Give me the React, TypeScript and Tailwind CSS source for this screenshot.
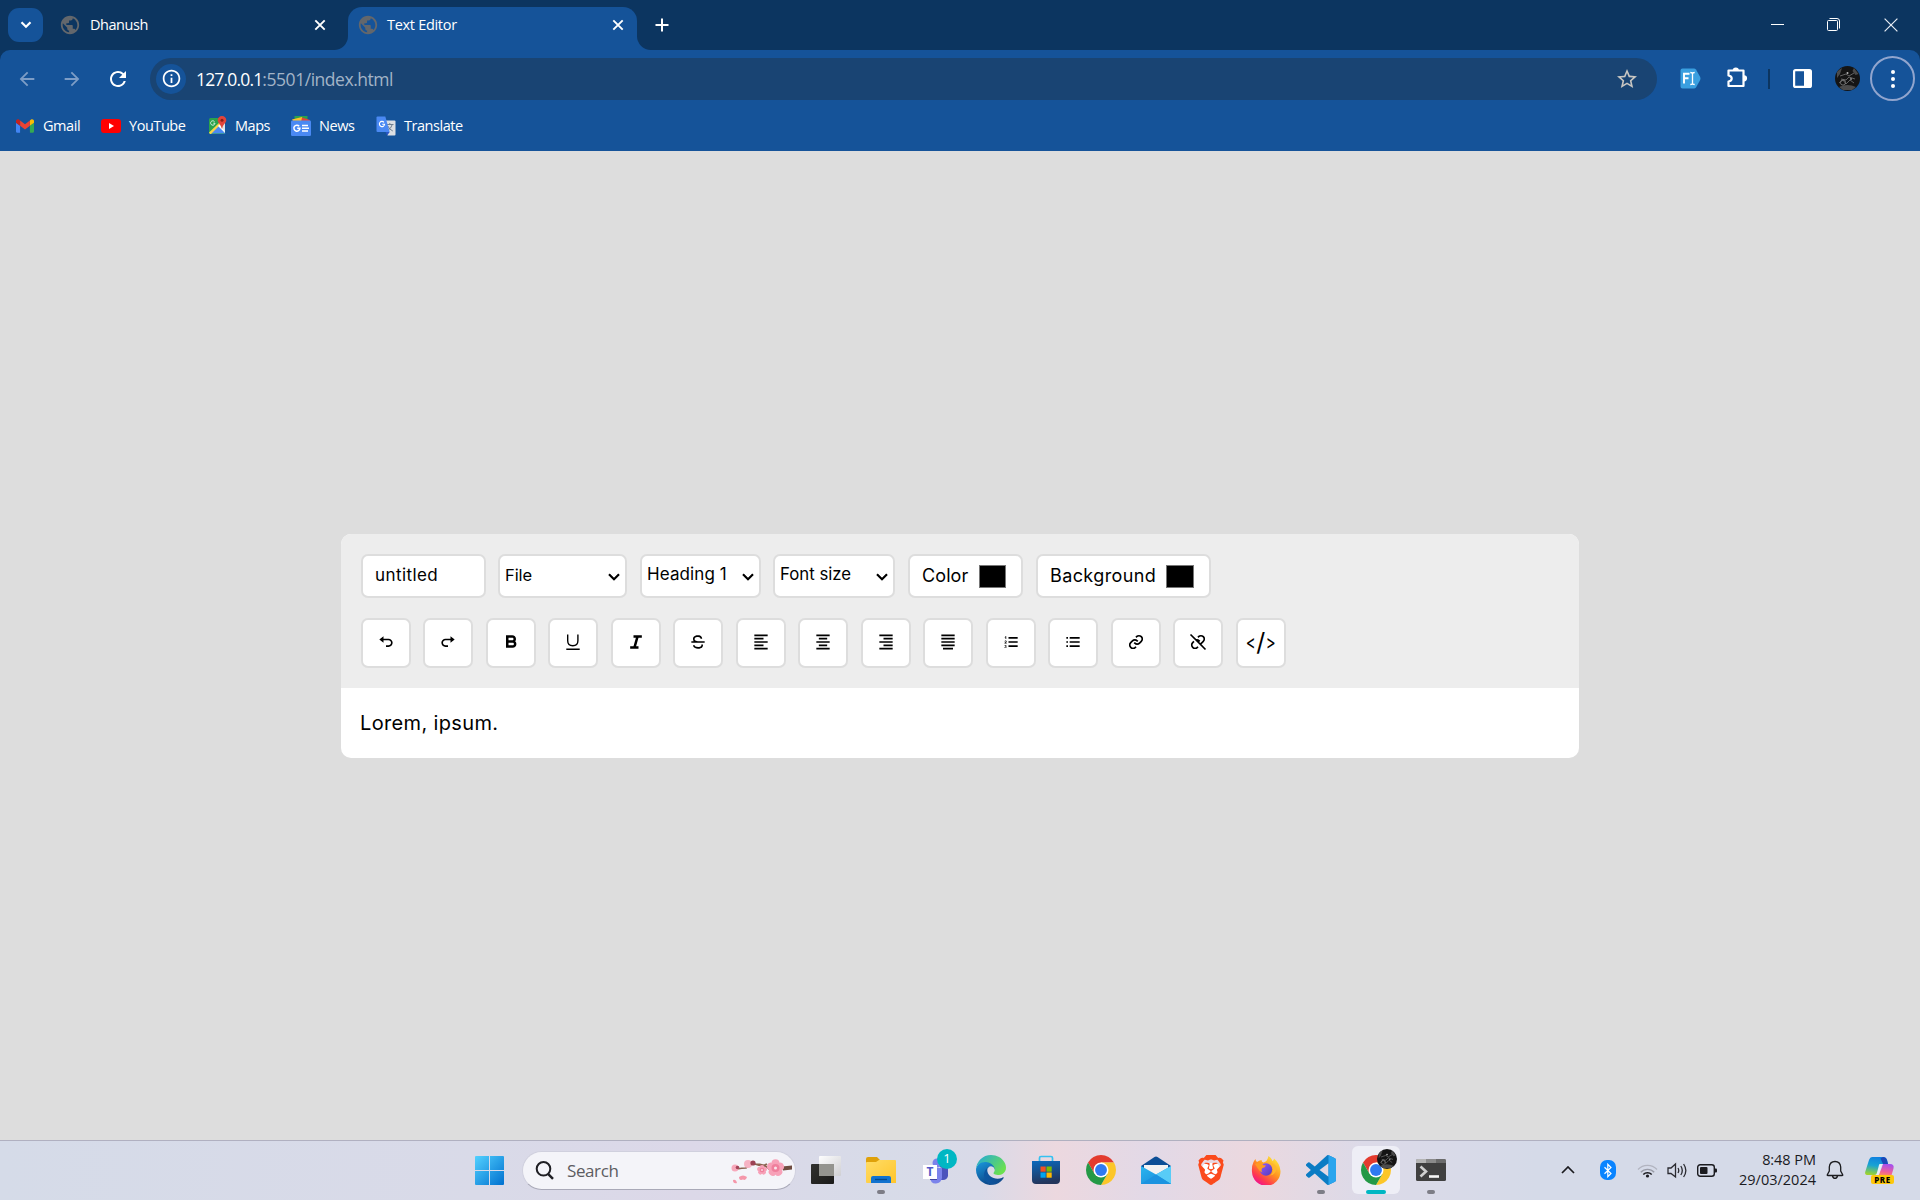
import React from 'react';
import type { ReactNode } from 'react';
import {
  BiUndo, BiRedo, BiBold, BiItalic, BiStrikethrough, BiAlignLeft, BiAlignMiddle,
  BiAlignRight, BiAlignJustify, BiListOl, BiListUl, BiLink, BiUnlink,
} from 'react-icons/bi';
import { MdPublic, MdArrowBack, MdArrowForward, MdRefresh, MdInfoOutline, MdStarBorder } from 'react-icons/md';
import { SiBrave } from 'react-icons/si';

/* ---------- browser chrome ---------- */

function CloseX() {
  return (
    <svg width="12" height="12" viewBox="0 0 12 12" fill="none" stroke="#fff" strokeWidth="1.9">
      <path d="M1.3 1.3 10.7 10.7M10.7 1.3 1.3 10.7" />
    </svg>
  );
}

function TabStrip() {
  return (
    <div className="flex h-[50px] items-start">
      <button className="ml-2 mt-2 flex h-[34px] w-[35px] items-center justify-center rounded-[11px] bg-[#155399]">
        <svg width="12" height="8" viewBox="0 0 12 8" fill="none" stroke="#fff" strokeWidth="2.2">
          <path d="m1.5 1.2 4.5 4.5 4.5-4.5" />
        </svg>
      </button>
      <div className="flex h-[50px] w-[305px] items-center pl-[16px] pr-[22px]">
        <MdPublic className="size-[22px] text-[#63676c]" />
        <span className="ml-[9px] flex-1 text-[14.5px] tracking-[-0.45px]">Dhanush</span>
        <CloseX />
      </div>
      <div className="relative flex h-[43px] w-[289px] items-center self-end rounded-t-[14px] bg-[#155399] pb-[7px] pl-[9px] pr-[13px]">
        <div className="absolute bottom-0 -left-[14px] size-[14px] bg-[#155399]">
          <div className="size-full rounded-br-[14px] bg-[#0c3560]" />
        </div>
        <div className="absolute bottom-0 -right-[14px] size-[14px] bg-[#155399]">
          <div className="size-full rounded-bl-[14px] bg-[#0c3560]" />
        </div>
        <MdPublic className="size-[22px] text-[#63676c]" />
        <span className="ml-[8px] flex-1 text-[14.5px] tracking-[-0.3px]">Text Editor</span>
        <CloseX />
      </div>
      <div className="ml-[18px] flex h-[50px] items-center">
        <svg width="14" height="14" viewBox="0 0 14 14" stroke="#fff" strokeWidth="2">
          <path d="M7 .5v13M.5 7h13" />
        </svg>
      </div>
      <div className="ml-auto flex h-[49px] items-center pr-[22px]">
        <div className="h-px w-[13px] bg-white" />
        <svg className="ml-[43px]" width="13" height="13" viewBox="0 0 13 13" fill="none" stroke="#fff">
          <path d="M2.5.5H10A2.5 2.5 0 0 1 12.5 3v7.5" />
          <rect x=".5" y="2.5" width="10" height="10" rx="1" />
        </svg>
        <svg className="ml-[44px]" width="14" height="14" viewBox="0 0 14 14" stroke="#e8edf4" strokeWidth="1.2">
          <path d="m.6.6 12.8 12.8M13.4.6.6 13.4" />
        </svg>
      </div>
    </div>
  );
}

function Avatar({ className }: { className: string }) {
  return (
    <svg className={className} viewBox="0 0 25 25">
      <circle cx="12.5" cy="12.5" r="12.5" fill="#141414" />
      <path d="M2 6a12.5 12.5 0 0 1 5-4l-2 6-3 4ZM19 2l4.5 6-3 1-3-4Z" fill="#4b4b4b" />
      <path d="M4 21q8-4 17 0l-4 3H8Z" fill="#4c4c4c" />
      <path d="M5 10l6-2 3 2 5-3M6 13l5 1 3-3 6 2M4 17l4-3 3 4 4-4 4 3" fill="none" stroke="#626262" strokeWidth="1" />
      <circle cx="8" cy="16.5" r="2.6" fill="none" stroke="#808080" strokeWidth=".8" />
      <circle cx="12.5" cy="7" r="1" fill="#b8b8b8" />
      <circle cx="16" cy="13" r=".9" fill="#999" />
    </svg>
  );
}

function AddressRow() {
  return (
    <div className="flex h-[57px] items-center pl-[16px] pr-[4px]">
      <MdArrowBack className="size-[22px] text-[#7d9dc6]" />
      <MdArrowForward className="ml-[23px] size-[22px] text-[#7d9dc6]" />
      <MdRefresh className="ml-[23px] size-[24px] text-white" />
      <div className="ml-[20px] flex h-[42px] w-[1507px] items-center rounded-full bg-[#194473] pl-[6px] pr-[18px]">
        <div className="flex size-[30px] items-center justify-center rounded-full bg-[#155399]">
          <MdInfoOutline className="size-[21px] text-white" />
        </div>
        <div className="ml-[10px] mt-px flex flex-1 text-[17.5px]">
          <span className="tracking-[-0.83px] text-white">127.0.0.1</span>
          <span className="tracking-[-0.46px] text-[#a3b4c7]">:5501/index.html</span>
        </div>
        <MdStarBorder className="size-[24px] text-[#c8c6c2]" />
      </div>
      <svg className="ml-[23px]" width="21" height="21" viewBox="0 0 21 21">
        <path d="M2.5.5H14q1.2 0 2 1l4.200 7.500q.6 1.500 0 3L16 19.500q-.8 1-2 1H2.500q-2 0-2-2v-16q0-2 2-2Z" fill="#3a9fe0" />
        <path d="M4 15.500V5.700h5.500M4 10.300h4.500" fill="none" stroke="#fff" strokeWidth="1.900" />
        <path d="M10.300 4.500q2.200 0 2.200 1.200v9.600q0 1.200-2.200 1.200M14.700 4.500q-2.200 0-2.200 1.200M14.700 16.500q-2.200 0-2.200-1.200" fill="none" stroke="#fff" strokeWidth="1.300" />
      </svg>
      <svg className="ml-[25px] -mt-[2px]" width="22" height="22" viewBox="0 0 22 22">
        <path d="M2.500 3.500h15v15.500h-15v-4.500q3.200-.5 3.200-3t-3.200-3Z" fill="none" stroke="#fff" strokeWidth="2.200" strokeLinejoin="round" />
        <path d="M6.700 3.500a3.100 3.100 0 0 1 6.200 0ZM18 8.200a3.100 3.100 0 0 1 0 6.200Z" fill="#fff" />
      </svg>
      <div className="ml-[20px] h-[20px] w-[2px] bg-[#0c3560]" />
      <svg className="ml-[23px]" width="19" height="19" viewBox="0 0 19 19">
        <rect x="1.100" y="1.100" width="16.800" height="16.800" rx="1.500" fill="none" stroke="#fff" strokeWidth="2.200" />
        <path d="M11 1h7v17h-7Z" fill="#fff" />
      </svg>
      <Avatar className="ml-[23px] size-[25px]" />
      <div className="ml-[10px] flex size-[45px] flex-col items-center justify-center gap-[3px] rounded-full border-2 border-[#91a5ce]">
        <div className="size-1 rounded-full bg-white" />
        <div className="size-1 rounded-full bg-white" />
        <div className="size-1 rounded-full bg-white" />
      </div>
    </div>
  );
}

function GmailIcon() {
  return (
    <svg width="18" height="14" viewBox="52 42 88 66">
      <path fill="#4285f4" d="M58 108h14V74L52 59v43c0 3.320 2.690 6 6 6" />
      <path fill="#34a853" d="M120 108h14c3.320 0 6-2.690 6-6V59l-20 15" />
      <path fill="#fbbc04" d="M120 48v26l20-15v-8c0-7.420-8.470-11.650-14.400-7.200" />
      <path fill="#ea4335" d="M72 74V48l24 18 24-18v26L96 92" />
      <path fill="#c5221f" d="M52 51v8l20 15V48l-5.600-4.200c-5.940-4.450-14.400-.22-14.400 7.200" />
    </svg>
  );
}

function YouTubeIcon() {
  return (
    <svg width="20" height="14" viewBox="0 0 20 14">
      <rect width="20" height="14" rx="3" fill="#f00" />
      <path d="m8 4 5 3-5 3Z" fill="#fff" />
    </svg>
  );
}

function MapsIcon() {
  return (
    <svg width="19" height="19" viewBox="0 0 19 19">
      <rect x="1" y="2" width="16" height="16" rx="1.500" fill="#2ba24c" />
      <path d="m1.500 17.500 9-8.500 7 8.500Z" fill="#4a89f3" />
      <path d="m11 8 6-2v10.500Z" fill="#dfe3e6" />
      <path d="M1 16.500 12.500 5.500 14 7 3 18H2Z" fill="#f9d349" />
      <path d="m10 10 1.500-1.500 5.500 7V17Z" fill="#fff" />
      <path d="M6.500 5.600A2.200 2.200 0 1 0 7 7.200H5.300" fill="none" stroke="#d5f0dc" strokeWidth="1" />
      <path d="M14 0a4.200 4.200 0 0 1 4.300 4.200C18.300 7 14.800 8 14.200 12.500h-.5C13 8 9.700 7 9.700 4.200A4.200 4.200 0 0 1 14 0Z" fill="#e2443a" />
      <circle cx="14" cy="4.200" r="1.500" fill="#8c1f18" />
    </svg>
  );
}

function NewsIcon() {
  return (
    <svg width="20" height="20" viewBox="0 0 20 20">
      <path d="M3.500 0h13v5h-13Z" fill="#2ba24c" />
      <path d="M1 3.500 11 1l1 4H2Z" fill="#fbc02d" />
      <path d="m11 1.500 8 2.500-.5 2H10Z" fill="#e2443a" />
      <rect y="4.500" width="20" height="15.500" rx="1.200" fill="#4a89f3" />
      <path d="M8.200 10.200a3 3 0 1 0 .7 2.100H6.200" fill="none" stroke="#fff" strokeWidth="1.500" />
      <path d="M11 9.500h6M11 12.200h7M11 15h6" stroke="#fff" strokeWidth="1.400" />
    </svg>
  );
}

function TranslateIcon() {
  return (
    <svg width="20" height="20" viewBox="0 0 20 20">
      <path d="M8 4.500h10.500q1 0 1 1v13q0 1-1 1h-7Z" fill="#dcdfe3" />
      <path d="M10 8.500h7.500M13.800 7v1.500M16.200 8.700q-1 4-5 6M11.800 10q1.500 3.500 5 5" fill="none" stroke="#6f7f8f" strokeWidth="1" />
      <path d="M1.500.5h7.800l4.400 15.500H1.500q-1 0-1-1v-13.500q0-1 1-1Z" fill="#4a89f3" />
      <path d="M9.500 16h4.200l-2.500 3.500Z" fill="#2a56c6" />
      <path d="M8 6.300a2.600 2.600 0 1 0 .6 1.900H6.200" fill="none" stroke="#fff" strokeWidth="1.100" />
    </svg>
  );
}

function Bookmark({ icon, className, children }: { icon: ReactNode; className: string; children: ReactNode }) {
  return (
    <div className={`flex items-center gap-[8px] text-[14.5px] ${className}`}>
      <span className="flex w-[20px] justify-center">{icon}</span>
      <span>{children}</span>
    </div>
  );
}

function BookmarksBar() {
  return (
    <div className="flex h-[37px] items-center pl-[15px] tracking-[-0.45px]">
      <Bookmark className="w-[86px]" icon={<GmailIcon />}>Gmail</Bookmark>
      <Bookmark className="w-[106px]" icon={<YouTubeIcon />}>YouTube</Bookmark>
      <Bookmark className="w-[84px]" icon={<MapsIcon />}>Maps</Bookmark>
      <Bookmark className="w-[85px]" icon={<NewsIcon />}>News</Bookmark>
      <Bookmark className="w-[90px]" icon={<TranslateIcon />}>Translate</Bookmark>
    </div>
  );
}

/* ---------- text editor ---------- */

const box = 'flex h-[44px] items-center rounded-[7px] border-2 border-[#dddddd] bg-white';

function SelectBox({ className, children }: { className: string; children: ReactNode }) {
  return (
    <div className={`${box} justify-between pl-[5px] pr-[5px] ${className}`}>
      <span className="-mt-[2px]">{children}</span>
      <svg className="mt-[2px]" width="12" height="8" viewBox="0 0 12 8" fill="none" stroke="#000" strokeWidth="2.200">
        <path d="m1 1.300 5 5 5-5" />
      </svg>
    </div>
  );
}

function UnderlineIcon() {
  return (
    <svg width="20" height="20" viewBox="0 0 20 20" fill="none" stroke="#000">
      <path d="M4.700 2.500v6.300q0 5 5.100 5t5.100-5V2.500" strokeWidth="1.400" />
      <path d="M3.300 17.300h13.400" strokeWidth="1.400" />
    </svg>
  );
}

function ToolButton({ children }: { children: ReactNode }) {
  return (
    <button className="flex size-[50px] items-center justify-center rounded-[7px] border-2 border-[#dddddd] bg-white pb-[2px] text-[20px]">
      {children}
    </button>
  );
}

function Editor() {
  return (
    <div className="h-[224px] w-[1238px] overflow-hidden rounded-[10px] bg-white font-['Inter',sans-serif] font-[370] text-black">
      <div className="flex h-[154px] flex-col gap-[20px] bg-[#ededed] p-[20px]">
        <div className="flex">
          <div className={`${box} w-[125px] pl-[12px] text-[17px] tracking-[0.42px]`}>
            <span className="-mt-px">untitled</span>
          </div>
          <SelectBox className="ml-[12px] w-[129px] text-[16.500px] tracking-[-0.1px]">File</SelectBox>
          <SelectBox className="ml-[13px] w-[121px] text-[17px] tracking-[0.1px]">Heading 1</SelectBox>
          <SelectBox className="ml-[12px] w-[122px] text-[16.800px]">Font size</SelectBox>
          <div className={`${box} ml-[13px] w-[115px] pl-[12px] text-[18px] tracking-[0.1px]`}>
            <span className="-mt-[2px] w-[57px]">Color</span>
            <div className="h-[23px] w-[27px] border border-[#767676] bg-black" />
          </div>
          <div className={`${box} ml-[13px] w-[175px] pl-[12px] text-[18px] tracking-[0.400px]`}>
            <span className="-mt-[2px] w-[116px]">Background</span>
            <div className="h-[23px] w-[28px] border border-[#767676] bg-black" />
          </div>
        </div>
        <div className="flex gap-[12.490px]">
          <ToolButton><BiUndo /></ToolButton>
          <ToolButton><BiRedo /></ToolButton>
          <ToolButton><BiBold /></ToolButton>
          <ToolButton><UnderlineIcon /></ToolButton>
          <ToolButton><BiItalic /></ToolButton>
          <ToolButton><BiStrikethrough /></ToolButton>
          <ToolButton><BiAlignLeft /></ToolButton>
          <ToolButton><BiAlignMiddle /></ToolButton>
          <ToolButton><BiAlignRight /></ToolButton>
          <ToolButton><BiAlignJustify /></ToolButton>
          <ToolButton><BiListOl /></ToolButton>
          <ToolButton><BiListUl /></ToolButton>
          <ToolButton><BiLink /></ToolButton>
          <ToolButton><BiUnlink /></ToolButton>
          <ToolButton>
            <span className="flex items-center leading-none">
              <span className="scale-x-75 text-[20px]">&lt;</span>
              <span className="-mx-px text-[25px]">/</span>
              <span className="scale-x-75 text-[20px]">&gt;</span>
            </span>
          </ToolButton>
        </div>
      </div>
      <div className="pl-[19px] pt-[20px] text-[20px] leading-[30px] tracking-[0.350px]">Lorem, ipsum.</div>
    </div>
  );
}

/* ---------- taskbar ---------- */

function Gradient({ id, from, to, x2 = '1', y2 = '1' }: { id: string; from: string; to: string; x2?: string; y2?: string }) {
  return (
    <linearGradient id={id} x1="0" y1="0" x2={x2} y2={y2}>
      <stop offset="0" stopColor={from} />
      <stop offset="1" stopColor={to} />
    </linearGradient>
  );
}

function StartIcon() {
  return (
    <svg width="29" height="29" viewBox="0 0 29 29">
      <defs>
        <linearGradient id="win" gradientUnits="userSpaceOnUse" x1="0" y1="0" x2="29" y2="29">
          <stop offset="0" stopColor="#52d1ff" />
          <stop offset="1" stopColor="#0070cf" />
        </linearGradient>
      </defs>
      <path fill="url(#win)" d="M1 0h13v14H0V1q0-1 1-1ZM15 0h13q1 0 1 1v13H15ZM0 15h14v14H1q-1 0-1-1ZM15 15h14v13q0 1-1 1H15Z" />
    </svg>
  );
}

function Flower({ x, y, r }: { x: number; y: number; r: number }) {
  return (
    <g transform={`translate(${x} ${y}) scale(${r})`}>
      {[0, 72, 144, 216, 288].map((a) => (
        <ellipse key={a} cx="0" cy="-.5" rx=".42" ry=".42" fill="#f7a1b8" transform={`rotate(${a})`} />
      ))}
      <circle r=".42" fill="#ef7f9c" />
      <circle r=".16" fill="#fbe3ea" />
    </g>
  );
}

function Blossom() {
  return (
    <svg className="mt-px" width="62" height="26" viewBox="0 0 62 26">
      <path d="M6 11q5-1 9-1 4-5 9-4 8 3 12 0M24 6q10 0 14 5 8-1 14-1" fill="none" stroke="#8a6250" strokeWidth="1.700" />
      <path d="M51 8.500 61 7.500v4l-9 1Z" fill="#6e4c40" />
      <circle cx="4" cy="10" r="3.500" fill="#f7a8bb" />
      <circle cx="6.500" cy="9.500" r="1.800" fill="#a3455a" />
      <circle cx="17" cy="6" r="4" fill="#f6b3c4" />
      <circle cx="22" cy="5" r="2.600" fill="#9c4255" />
      <Flower x={31} y={12} r={5.500} />
      <Flower x={44.500} y={10} r={9.500} />
      <path d="M8 19q4-3 8 0-1 4-4 2.500-4 1.500-4-2.500ZM2 22q3-1 4 3-4 1-4-3Z" fill="#f597aa" />
    </svg>
  );
}

function TaskViewIcon() {
  return (
    <svg width="30" height="30" viewBox="0 0 30 30">
      <defs>
        <Gradient id="tv1" from="#30302e" to="#1b1b1a" />
        <Gradient id="tv2" from="#ffffff" to="#cfcfd2" />
      </defs>
      <rect x="0" y="9" width="23" height="20" rx="1" fill="url(#tv1)" />
      <rect x="8" y="1" width="22" height="20" rx="1" fill="url(#tv2)" opacity=".96" />
      <path d="M8 9h15v12H8Z" fill="#94948f" />
    </svg>
  );
}

function FolderIcon() {
  return (
    <svg width="30" height="30" viewBox="0 0 30 30">
      <defs><Gradient id="fold" from="#ffdc66" to="#ffc52b" /></defs>
      <path d="M0 12V4q0-2 2-2h9l3 3h14v9Z" fill="#dfa10a" />
      <path d="M0 8q0-1 1-1h9l3-2h16q1 0 1 1v22H1q-1 0-1-1Z" fill="url(#fold)" />
      <path d="M5 28v-5q0-2 2-2h16q2 0 2 2v5Z" fill="#1273cf" />
      <path d="M9 24.500h12" stroke="#064a8c" strokeWidth="1.300" />
    </svg>
  );
}

function TeamsIcon() {
  return (
    <div className="relative size-[30px]">
      <svg width="30" height="30" viewBox="0 0 30 30">
        <circle cx="22" cy="9" r="4" fill="#4b53bc" />
        <path d="M19 13h8v8q-1 4-5 4h-3Z" fill="#4b53bc" />
        <circle cx="16" cy="8" r="4.500" fill="#7b83eb" />
        <path d="M9 13h12v10q-1 5-6 5.500T9 23Z" fill="#7b83eb" />
        <path d="M9 13h7v12H9Z" fill="#3f46a0" />
        <rect x="2" y="10" width="14" height="14" fill="#fff" />
      </svg>
      <span className="absolute left-[2px] top-[10px] w-[14px] text-center text-[12px] font-bold leading-[14px] text-[#5059c9]">T</span>
      <span className="absolute -top-[6px] left-[16px] flex size-5 items-center justify-center rounded-full bg-[#00b7c3] text-[13px] font-medium text-white">1</span>
    </div>
  );
}

function EdgeIcon() {
  return (
    <svg width="30" height="30" viewBox="0 0 256 256">
      <defs>
        <Gradient id="e1" from="#0c59a4" to="#114a8b" x2="1" y2="0" />
        <Gradient id="e2" from="#1b9de2" to="#0b4a8c" x2=".4" y2="1" />
        <Gradient id="e3" from="#1fa7e0" to="#6be04f" x2="1" y2=".6" />
      </defs>
      <g transform="translate(-4.630 -4.920)">
        <path fill="url(#e1)" d="M235.680 195.460a93.730 93.730 0 0 1-10.540 4.710 101.870 101.870 0 0 1-35.900 6.460c-47.320 0-88.540-32.550-88.540-74.320A31.480 31.480 0 0 1 117.130 105c-42.800 1.800-53.800 46.400-53.800 72.530 0 73.880 68.090 81.370 82.760 81.370 7.910 0 19.840-2.300 27-4.560l1.310-.44a128.340 128.340 0 0 0 66.600-52.800 4 4 0 0 0-5.320-5.640Z" />
        <path fill="url(#e2)" d="M110.340 246.340A79.200 79.200 0 0 1 87.600 225 80.720 80.720 0 0 1 117.130 105c3.120-1.470 8.450-4.130 15.540-4a32.350 32.350 0 0 1 25.690 13 31.880 31.880 0 0 1 6.360 18.660c0-.21 24.460-79.600-80-79.600-43.900 0-80 41.660-80 78.210a130.150 130.150 0 0 0 12.110 56 128 128 0 0 0 156.380 67.110 75.550 75.550 0 0 1-62.780-8Z" />
        <path fill="url(#e3)" d="M156.940 153.780c-.81 1.050-3.300 2.500-3.300 5.660 0 2.610 1.700 5.120 4.720 7.230 14.380 10 41.490 8.680 41.560 8.680A59.560 59.560 0 0 0 230.190 167a61.380 61.380 0 0 0 30.430-52.880c.26-22.410-8-37.310-11.340-43.910C228.120 28.770 182.350 4.920 132.610 4.920a128 128 0 0 0-128 126.200c.48-36.540 36.800-66.050 80-66.050 3.500 0 23.460.34 42 10.070 16.340 8.580 24.900 18.940 30.850 29.210 6.180 10.670 7.280 24.150 7.280 29.520s-2.740 13.330-7.800 19.910Z" />
      </g>
    </svg>
  );
}

function StoreIcon() {
  return (
    <svg width="30" height="30" viewBox="0 0 30 30">
      <defs><Gradient id="store" from="#0a69bd" to="#23355b" x2=".2" y2="1" /></defs>
      <path d="M8.500 7V3q0-1.500 1.500-1.500h10q1.500 0 1.500 1.500v4" fill="none" stroke="#35c1f1" strokeWidth="1.700" />
      <path d="M1 6h28v19q0 4-4 4H5q-4 0-4-4Z" fill="url(#store)" />
      <path d="M9.500 11.500h5.200v5.200H9.500Z" fill="#f25022" />
      <path d="M15.500 11.500h5.200v5.200h-5.200Z" fill="#7fba00" />
      <path d="M9.500 17.500h5.200v5.200H9.500Z" fill="#00a4ef" />
      <path d="M15.500 17.500h5.200v5.200h-5.200Z" fill="#ffb900" />
    </svg>
  );
}

function ChromeIcon() {
  return (
    <svg width="30" height="30" viewBox="0 0 48 48">
      <path fill="#e33b2e" d="M3.220 12A24 24 0 0 1 44.780 12H24L13.610 30Z" />
      <path fill="#fcc629" d="M44.780 12A24 24 0 0 1 24 48L34.390 30 24 12Z" />
      <path fill="#249946" d="M24 48A24 24 0 0 1 3.220 12L13.610 30H34.390Z" />
      <circle cx="24" cy="24" r="12" fill="#fff" />
      <circle cx="24" cy="24" r="9.500" fill="#2f7af0" />
    </svg>
  );
}

function MailIcon() {
  return (
    <svg width="30" height="30" viewBox="0 0 30 30">
      <defs><Gradient id="mail" from="#2bb6ef" to="#1685d8" /></defs>
      <path d="M0 11 13.500 2q1.500-1 3 0L30 11v6H0Z" fill="#0c4f96" />
      <path d="M3 10h24v6l-12 8L3 16Z" fill="#f2f2f2" />
      <path d="M0 11 15 19.500 30 11v18H0Z" fill="url(#mail)" />
      <path d="M30 11 15 19.500 30 29Z" fill="#58ccf7" />
      <path d="M0 29 15 19.500 30 29Z" fill="#1b93e0" />
    </svg>
  );
}

function BraveIcon() {
  return (
    <div className="relative flex size-[30px] items-center justify-center">
      <svg className="absolute" width="30" height="30" viewBox="0 0 30 30">
        <path d="M9 8h12l4 5-3 9-7 6-7-6-3-9Z" fill="#fff" />
      </svg>
      <SiBrave className="relative size-[30px] text-[#fb4a1c]" />
    </div>
  );
}

function FirefoxIcon() {
  return (
    <svg width="30" height="30" viewBox="0 0 30 30">
      <defs>
        <linearGradient id="ff" x1=".85" y1=".1" x2=".25" y2=".95">
          <stop offset="0" stopColor="#ffe23a" />
          <stop offset=".45" stopColor="#ff9320" />
          <stop offset=".8" stopColor="#ff3a4e" />
          <stop offset="1" stopColor="#f0158c" />
        </linearGradient>
        <Gradient id="ffp" from="#9059ff" to="#5a3bb8" />
      </defs>
      <path d="M2.500 7q1-2 2-3 0 2 1.500 3Q8 5.500 10.500 5q0 2 2 2.500 4-1 5-6.500 3 2 4 5 1.500-1 1.500-2.500 6 5 6.500 12.500A14.200 14.200 0 0 1 1 17Q.5 11 2.500 7Z" fill="url(#ff)" />
      <circle cx="15" cy="14.500" r="6.200" fill="url(#ffp)" />
      <path d="M4 9q4-2 7 0 1 1.500 4 1.500-1 2-3.500 2.500-2 2 0 4.500Q8 16 6.500 13Z" fill="#ff9a22" />
      <path d="M19 8.500q3 2 3 6 0 4-3 6 6-1 6.500-7-.5-3.500-4-5-1-.5-2.500 0Z" fill="#ffb52e" />
    </svg>
  );
}

function VsCodeIcon() {
  return (
    <svg width="30" height="30" viewBox="0 0 24 24">
      <path
        fill="#0b7cc4"
        d="M23.150 2.587L18.210.21a1.494 1.494 0 0 0-1.705.29l-9.460 8.630-4.120-3.128a.999.999 0 0 0-1.276.057L.327 7.261A1 1 0 0 0 .326 8.740L3.899 12 .326 15.260a1 1 0 0 0 .001 1.479L1.650 17.940a.999.999 0 0 0 1.276.057l4.120-3.128 9.460 8.630a1.492 1.492 0 0 0 1.704.29l4.942-2.377A1.500 1.500 0 0 0 24 20.060V3.939a1.500 1.500 0 0 0-.85-1.352zm-5.146 14.861L10.826 12l7.178-5.448v10.896z"
      />
      <path fill="#2aa5ee" d="M18 .2 23.150 2.587A1.500 1.500 0 0 1 24 3.939V20.060a1.500 1.500 0 0 1-.85 1.352L18 23.800Z" />
    </svg>
  );
}

function TerminalIcon() {
  return (
    <svg width="30" height="30" viewBox="0 0 30 30">
      <path d="M1.500 4h27Q30 4 30 5.500V8H0V5.500Q0 4 1.500 4Z" fill="#8b8b8b" />
      <path d="M0 5.500Q0 4 1.500 4H10v4H0Z" fill="#b5b5b5" />
      <path d="M20 4h8.500Q30 4 30 5.500V8H20Z" fill="#6b6b6b" />
      <path d="M0 8h30v16.500q0 1.500-1.500 1.500h-27Q0 26 0 24.500Z" fill="#404040" />
      <path d="m4.500 11.500 5.500 5-5.500 5" fill="none" stroke="#d0d0d0" strokeWidth="2.600" />
      <path d="M13 21.500h10" stroke="#f5f5f5" strokeWidth="2.600" />
    </svg>
  );
}

function TaskItem({ children, running = false }: { children: ReactNode; running?: boolean }) {
  return (
    <div className="flex h-full w-[55px] flex-col items-center pt-[14px]">
      {children}
      {running && <div className="mt-[5px] h-1 w-2 rounded-full bg-[#7d7d86]" />}
    </div>
  );
}

function ActiveChrome() {
  return (
    <div className="flex h-full w-[55px] justify-center pt-[5px]">
      <div className="relative flex size-[48px] flex-col items-center rounded-[6px] bg-[#eeeef6] pt-[9px]">
        <ChromeIcon />
        <Avatar className="absolute left-[25px] top-[3px] size-5" />
        <div className="mt-[5px] h-1 w-5 rounded-full bg-[#00b7c3]" />
      </div>
    </div>
  );
}

function CopilotIcon() {
  return (
    <div className="relative h-[30px] w-[30px]">
      <svg width="30" height="30" viewBox="0 0 30 30">
        <defs>
          <linearGradient id="cp1" x1=".6" y1="0" x2=".4" y2="1">
            <stop offset="0" stopColor="#0f7fe0" />
            <stop offset=".5" stopColor="#19a3d3" />
            <stop offset="1" stopColor="#9ed32f" />
          </linearGradient>
          <linearGradient id="cp2" x1=".6" y1="0" x2=".4" y2="1">
            <stop offset="0" stopColor="#a350f0" />
            <stop offset=".6" stopColor="#f0609a" />
            <stop offset="1" stopColor="#ff9a4a" />
          </linearGradient>
        </defs>
        <path d="M7 2h11q3 0 4 3l1 4h-5q-2 0-3 3l-2 5q-1 3-4 3H3q-4 0-2.500-4L4 5q1-3 3-3Z" fill="url(#cp1)" />
        <path d="M18 2q3 0 4 3l1 4h-5L15.500 3.500Z" fill="#1b48b8" />
        <path d="M18 9h7q4.500 0 3.500 4.500L26 22H11q3-1 4-5l2-5q.5-2 1-3Z" fill="url(#cp2)" />
        <path d="M14.500 9H18q-1.500 1-2 4l-2 6q-.7 2-2.500 2.500H8q3 0 4-4l1.500-5.500q.3-2 1-3Z" fill="#e9edf7" />
      </svg>
      <span className="absolute left-[6px] top-[20px] flex h-[9px] w-[23px] items-center justify-center rounded-[2px] bg-[#fdc70c] font-['Noto_Sans',sans-serif] text-[8px] font-extrabold tracking-[0.5px] text-black">
        PRE
      </span>
    </div>
  );
}

function Tray() {
  return (
    <div className="ml-auto flex h-full items-center pr-[25px] pb-px">
      <svg width="14" height="8" viewBox="0 0 14 8" fill="none" stroke="#1b1b1f" strokeWidth="1.700">
        <path d="m1 7 6-6 6 6" />
      </svg>
      <div className="ml-[25px] flex h-[20px] w-[16px] items-center justify-center rounded-[7px] bg-[#0a84ff]">
        <svg width="10" height="15" viewBox="0 0 10 15" fill="none" stroke="#fff" strokeWidth="1.200">
          <path d="m1.500 4.300 6.500 6.200-3.200 3.200V1.300L8 4.500 1.500 10.700" />
        </svg>
      </div>
      <svg className="ml-[21px]" width="21" height="15" viewBox="0 0 21 15" fill="none" strokeWidth="1.300">
        <path d="M1 6.500a13 13 0 0 1 19 0" stroke="#b2b4c0" />
        <path d="M3.800 9.200a9.200 9.200 0 0 1 13.400 0" stroke="#9a9ca8" />
        <path d="M6.300 11.500a6 6 0 0 1 8.400 0" stroke="#1b1b1f" strokeWidth="1.600" />
        <circle cx="10.500" cy="13" r="1.600" fill="#1b1b1f" />
      </svg>
      <svg className="ml-[9px]" width="21" height="17" viewBox="0 0 21 17" fill="none" stroke="#2a2a30" strokeWidth="1.300">
        <path d="M1 6h3l4.500-4v13L4 11.500H1ZM11 6q1.500 2.500 0 5M13.800 4q3 4.500 0 9M16.600 2q4.500 6.500 0 13" />
      </svg>
      <svg className="ml-[9px]" width="21" height="13" viewBox="0 0 21 13" fill="none" stroke="#1b1b1f" strokeWidth="1.400">
        <rect x=".7" y=".7" width="16.600" height="11.600" rx="2.500" />
        <rect x="3" y="3" width="7.500" height="7" rx="1" fill="#1b1b1f" stroke="none" />
        <path d="M18 4.500h1q1 0 1 1v2q0 1-1 1h-1Z" fill="#1b1b1f" stroke="none" />
      </svg>
      <div className="ml-[19px] w-[79px] text-right text-[14.500px] leading-[20px] text-[#1b1b1f]">
        <div className="tracking-[-0.050px]">8:48 PM</div>
        <div>29/03/2024</div>
      </div>
      <svg className="ml-[10px]" width="18" height="20" viewBox="0 0 18 20" fill="none" stroke="#1b1b1f" strokeWidth="1.300">
        <path d="M9 1.500q5.200 0 5.700 5.500v4l2 3.800q.3.700-.6.700H1.900q-.9 0-.6-.7l2-3.800V7Q3.800 1.500 9 1.500ZM6.500 16q.5 2.300 2.500 2.300t2.500-2.300" />
      </svg>
      <div className="ml-[21px]"><CopilotIcon /></div>
    </div>
  );
}

function Taskbar() {
  return (
    <div className="flex h-[60px] border-t border-[#b0b0c0] bg-[linear-gradient(90deg,#d5dbe8_0%,#d9dae8_25%,#dcd8e8_36%,#d7dbe8_46%,#d9dae8_51%,#ecd8df_55%,#e2d9e7_60%,#ebd8df_65%,#dcdae8_71%,#d5dae8_80%,#d5dae8_100%)]">
      <div className="ml-[475px] flex h-full pt-[15px]"><StartIcon /></div>
      <div className="ml-[18px] mt-[10px] flex h-[39px] w-[274px] items-center rounded-full border border-[#d0d0de] border-b-[#a9a9b8] bg-[#f4f4f9] pl-[12px] pr-[2px]">
        <svg width="19" height="19" viewBox="0 0 19 19" fill="none" stroke="#1f1f24" strokeWidth="2">
          <circle cx="8.500" cy="7.800" r="6.800" />
          <path d="m13 12.800 5 5" strokeWidth="2.500" />
        </svg>
        <span className="ml-[13px] flex-1 text-[17px] tracking-[-0.4px] text-[#5c5c61]">Search</span>
        <Blossom />
      </div>
      <div className="ml-[2.500px] flex h-full">
        <TaskItem><TaskViewIcon /></TaskItem>
        <TaskItem running><FolderIcon /></TaskItem>
        <TaskItem><TeamsIcon /></TaskItem>
        <TaskItem><EdgeIcon /></TaskItem>
        <TaskItem><StoreIcon /></TaskItem>
        <TaskItem><ChromeIcon /></TaskItem>
        <TaskItem><MailIcon /></TaskItem>
        <TaskItem><BraveIcon /></TaskItem>
        <TaskItem><FirefoxIcon /></TaskItem>
        <TaskItem running><VsCodeIcon /></TaskItem>
        <ActiveChrome />
        <TaskItem running><TerminalIcon /></TaskItem>
      </div>
      <Tray />
    </div>
  );
}

export default function App() {
  return (
    <div className="flex h-[1200px] w-[1920px] flex-col overflow-hidden bg-[#dddddd] font-['Open_Sans',sans-serif]">
      <header className="bg-[#0c3560] text-white">
        <TabStrip />
        <div className="h-[101px] rounded-t-[10px] bg-[#155399]">
          <AddressRow />
          <BookmarksBar />
        </div>
      </header>
      <main className="flex flex-1 justify-center pt-[383px]">
        <Editor />
      </main>
      <Taskbar />
    </div>
  );
}
